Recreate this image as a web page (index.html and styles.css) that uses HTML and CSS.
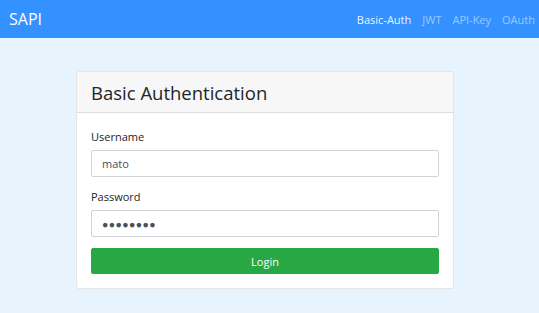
FILE: index.html
```html
<!DOCTYPE html>
<html>
<head>
<meta charset="utf-8">
<link rel="stylesheet" href="styles.css">
</head>
<body>
<nav class="navbar">
  <span class="brand">SAPI</span>
  <ul class="nav">
    <li class="nav-link active">Basic-Auth</li>
    <li class="nav-link">JWT</li>
    <li class="nav-link">API-Key</li>
    <li class="nav-link">OAuth</li>
  </ul>
</nav>
<main class="content">
  <section class="card">
    <header class="card-header">Basic Authentication</header>
    <form class="card-body">
      <label class="label">Username</label>
      <input class="input" type="text" value="mato">
      <label class="label">Password</label>
      <div class="input dots">&#9679;&#9679;&#9679;&#9679;&#9679;&#9679;&#9679;&#9679;</div>
      <button class="btn" type="button">Login</button>
    </form>
  </section>
</main>
</body>
</html>
```
FILE: styles.css
```css
html, body {
  margin: 0;
  padding: 0;
  height: 100%;
}
body {
  background: #e7f3fd;
  font-family: "Open Sans", "Noto Sans", sans-serif;
  color: #212529;
}
.navbar {
  height: 38px;
  background: #3392ff;
  display: flex;
  align-items: center;
  justify-content: space-between;
  padding: 0 4px 0 9px;
  box-sizing: border-box;
}
.brand {
  color: #fff;
  font-size: 16px;
}
.nav {
  list-style: none;
  margin: 0;
  padding: 0;
  display: flex;
  gap: 11px;
}
.nav-link {
  font-size: 11px;
  color: rgba(255, 255, 255, 0.5);
}
.nav-link.active {
  color: rgba(255, 255, 255, 0.92);
}
.content {
  padding: 33px 9px 0 0;
  display: flex;
  justify-content: center;
}
.card {
  width: 378px;
  background: #fff;
  border: 1px solid rgba(0, 0, 0, 0.1);
  border-radius: 3px;
  box-sizing: border-box;
}
.card-header {
  height: 41px;
  box-sizing: border-box;
  padding: 0 14px;
  display: flex;
  align-items: center;
  background: #f7f7f7;
  border-bottom: 1px solid rgba(0, 0, 0, 0.1);
  font-size: 18.5px;
}
.card-body {
  padding: 15px 14px 14px;
  display: flex;
  flex-direction: column;
}
.label {
  font-size: 11px;
  line-height: 18px;
  margin-bottom: 4px;
}
.input {
  height: 27px;
  box-sizing: border-box;
  border: 1px solid #ced4da;
  border-radius: 2px;
  padding: 0 10px;
  font-family: inherit;
  font-size: 11px;
  color: #495057;
  margin: 0 0 11px 0;
  display: flex;
  align-items: center;
}
.dots {
  font-size: 10.5px;
  letter-spacing: 0.4px;
  color: #495057;
  padding-left: 10px;
}
.btn {
  height: 26px;
  border: 1px solid #28a745;
  border-radius: 2px;
  background: #28a745;
  color: #fff;
  font-family: inherit;
  font-size: 11px;
  padding: 0;
}
```
